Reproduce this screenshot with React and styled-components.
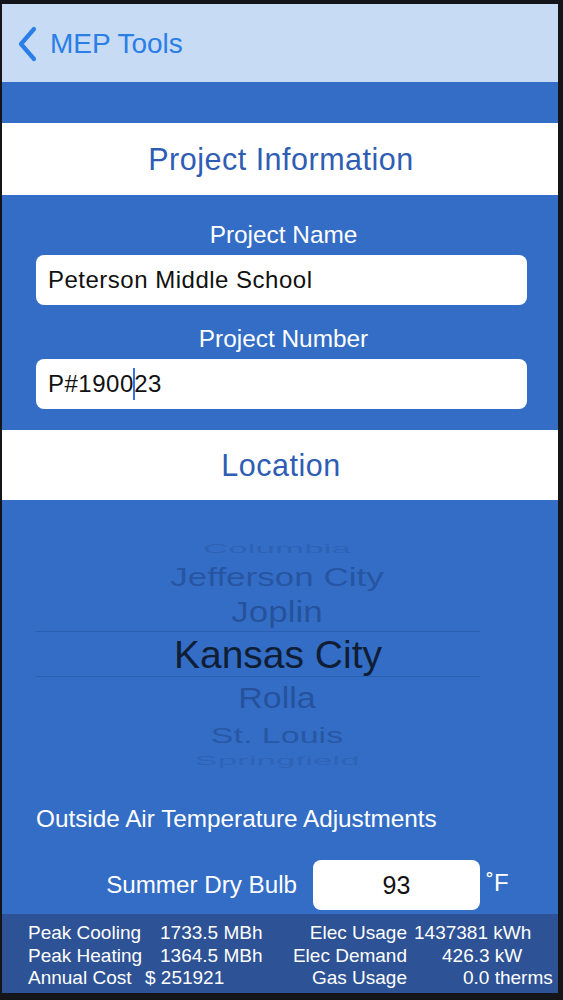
import styled, { createGlobalStyle } from "styled-components";

const GlobalStyle = createGlobalStyle`
  html, body {
    margin: 0;
    padding: 0;
    background: #141518;
  }
  body {
    font-family: "Liberation Sans", Arial, sans-serif;
  }
`;

const BLUE = "#336dc6";

const cities = [
  { name: "Columbia", h: 24, size: 35, scale: 0.38, color: "rgba(30, 60, 120, 0.22)" },
  { name: "Jefferson City", h: 32, size: 35, scale: 0.74, color: "rgba(25, 55, 115, 0.45)" },
  { name: "Joplin", h: 39, size: 35, scale: 0.85, color: "rgba(25, 55, 115, 0.5)" },
  { name: "Kansas City", h: 46, size: 39, scale: 1, color: "#0f1d35", selected: true },
  { name: "Rolla", h: 42, size: 34, scale: 0.86, color: "rgba(25, 55, 115, 0.5)" },
  { name: "St. Louis", h: 32, size: 34, scale: 0.66, color: "rgba(25, 55, 115, 0.42)" },
  { name: "Springfield", h: 18, size: 35, scale: 0.34, color: "rgba(30, 60, 120, 0.2)" },
];

const stats = [
  { label: "Peak Cooling", value: "1733.5 MBh", shift: 2, label2: "Elec Usage", value2: "1437381 kWh", shift2: 7 },
  { label: "Peak Heating", value: "1364.5 MBh", shift: 2, label2: "Elec Demand", value2: "426.3 kW", shift2: 35 },
  { label: "Annual Cost", value: "$ 251921", shift: -13, label2: "Gas Usage", value2: "0.0 therms", shift2: 56 },
];

const App = () => {
  return (
    <Frame>
      <GlobalStyle />
      <Screen>
        <NavBar>
          <BackButton>
            <svg width="20" height="36" viewBox="0 0 20 36" fill="none">
              <path d="M17 3 L4 18 L17 33" stroke="#2a7ee6" strokeWidth="4.2" strokeLinecap="round" strokeLinejoin="round" />
            </svg>
            MEP Tools
          </BackButton>
        </NavBar>
        <Main>
          <Band />
          <SectionHeader $h={72}>Project Information</SectionHeader>
          <Form>
            <FieldLabel>Project Name</FieldLabel>
            <TextBox>Peterson Middle School</TextBox>
            <FieldLabel $gap={22}>Project Number</FieldLabel>
            <TextBox>
              P#1900<Caret />23
            </TextBox>
          </Form>
          <SectionHeader $h={70}>Location</SectionHeader>
          <Wheel>
            {cities.map((c) =>
              c.selected ? (
                <SelectedRow key={c.name} $h={c.h}>
                  <WheelText $size={c.size} $scale={c.scale} $color={c.color}>
                    {c.name}
                  </WheelText>
                </SelectedRow>
              ) : (
                <WheelRow key={c.name} $h={c.h}>
                  <WheelText $size={c.size} $scale={c.scale} $color={c.color}>
                    {c.name}
                  </WheelText>
                </WheelRow>
              )
            )}
          </Wheel>
          <SubHeading>Outside Air Temperature Adjustments</SubHeading>
          <TempRow>
            <TempLabel>Summer Dry Bulb</TempLabel>
            <TempBox>93</TempBox>
            <Unit>˚F</Unit>
          </TempRow>
        </Main>
        <Footer>
          {stats.map((s) => (
            <StatRow key={s.label}>
              <StatLabel>{s.label}</StatLabel>
              <StatValue $shift={s.shift}>{s.value}</StatValue>
              <StatLabel2>{s.label2}</StatLabel2>
              <StatValue $shift={s.shift2}>{s.value2}</StatValue>
            </StatRow>
          ))}
        </Footer>
      </Screen>
    </Frame>
  );
};

const Frame = styled.div`
  box-sizing: border-box;
  height: 1000px;
  padding: 4px 5px 7px 2px;
  display: flex;
`;

const Screen = styled.div`
  flex: 1;
  display: flex;
  flex-direction: column;
  background: ${BLUE};
  overflow: hidden;
`;

const NavBar = styled.div`
  height: 78px;
  flex-shrink: 0;
  background: #c8dbf5;
  display: flex;
  align-items: center;
  padding-left: 15px;
`;

const BackButton = styled.div`
  display: flex;
  align-items: center;
  gap: 13px;
  color: #2a7ee6;
  font-size: 28px;
  margin-top: 2px;
`;

const Main = styled.div`
  flex: 1;
  display: flex;
  flex-direction: column;
`;

const Band = styled.div`
  height: 41px;
`;

const SectionHeader = styled.div`
  height: ${(p) => p.$h}px;
  background: #fff;
  display: flex;
  align-items: center;
  justify-content: center;
  color: #2f5db4;
  font-size: 30.5px;
  letter-spacing: 0.5px;
  padding-left: 2px;
`;

const Form = styled.div`
  display: flex;
  flex-direction: column;
  padding: 28px 31px 21px 34px;
`;

const FieldLabel = styled.div`
  color: #fff;
  font-size: 24.4px;
  line-height: 24px;
  text-align: center;
  margin-top: ${(p) => p.$gap || 0}px;
  margin-bottom: 8px;
  padding-left: 4px;
`;

const TextBox = styled.div`
  height: 50px;
  background: #fff;
  border-radius: 8px;
  display: flex;
  align-items: center;
  padding-left: 12px;
  font-size: 24px;
  letter-spacing: 0.5px;
  color: #111;
`;

const Caret = styled.span`
  display: inline-block;
  width: 2.5px;
  height: 32px;
  background: #3c6fe0;
  margin: 0 -1px;
`;

const Wheel = styled.div`
  display: flex;
  flex-direction: column;
  padding-top: 36px;
`;

const WheelRow = styled.div`
  height: ${(p) => p.$h}px;
  display: flex;
  align-items: center;
  justify-content: center;
  padding-right: 6px;
`;

const SelectedRow = styled(WheelRow)`
  margin: 0 78px 0 34px;
  padding: 0 0 0 40px;
  border-top: 1px solid #2a5fb2;
  border-bottom: 1px solid #2a5fb2;
  box-sizing: border-box;
`;

const WheelText = styled.span`
  font-size: ${(p) => p.$size}px;
  color: ${(p) => p.$color};
  transform: scaleY(${(p) => p.$scale});
  white-space: nowrap;
  line-height: 1;
`;

const SubHeading = styled.div`
  margin-top: 36px;
  padding-left: 34px;
  color: #fff;
  font-size: 24.3px;
  line-height: 28px;
`;

const TempRow = styled.div`
  margin-top: 27px;
  display: flex;
  align-items: center;
`;

const TempLabel = styled.div`
  width: 311px;
  text-align: right;
  color: #fff;
  font-size: 24.2px;
  padding-right: 16px;
  box-sizing: border-box;
`;

const TempBox = styled.div`
  width: 167px;
  height: 50px;
  background: #fff;
  border-radius: 8px;
  display: flex;
  align-items: center;
  justify-content: center;
  font-size: 25px;
  color: #111;
`;

const Unit = styled.div`
  color: #fff;
  font-size: 24px;
  margin-left: 6px;
  margin-top: -4px;
`;

const Footer = styled.div`
  height: 79px;
  flex-shrink: 0;
  background: #2d5295;
  padding: 8px 0 0 26px;
  box-sizing: border-box;
  display: flex;
  flex-direction: column;
`;

const StatRow = styled.div`
  display: grid;
  grid-template-columns: 130px 104px 145px 1fr;
  height: 22.5px;
  align-items: center;
  color: #fff;
  font-size: 19px;
  white-space: nowrap;
`;

const StatLabel = styled.div``;

const StatLabel2 = styled.div`
  text-align: right;
`;

const StatValue = styled.div`
  margin-left: ${(p) => p.$shift}px;
`;

export default App;
